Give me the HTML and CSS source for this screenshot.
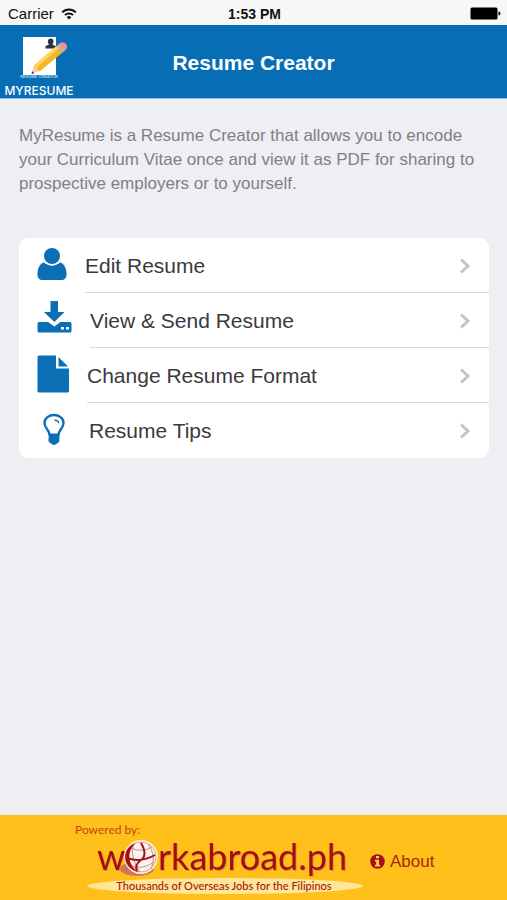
FILE: index.html
```html
<!DOCTYPE html>
<html lang="en">
<head>
<meta charset="utf-8">
<meta name="viewport" content="width=device-width, initial-scale=1">
<title>Resume Creator</title>
<link rel="stylesheet" href="styles.css">
</head>
<body>
<div class="status">
  <div class="carrier">
    <span>Carrier</span>
    <svg width="16" height="12" viewBox="0 0 16 12" aria-hidden="true">
      <path d="M1.2 4.4a9.6 9.6 0 0 1 13.6 0" fill="none" stroke="#111" stroke-width="2"/>
      <path d="M3.9 7.2a5.8 5.8 0 0 1 8.2 0" fill="none" stroke="#111" stroke-width="1.8"/>
      <path d="M8 11.6L5.7 9.2a3.3 3.3 0 0 1 4.6 0z" fill="#111"/>
    </svg>
  </div>
  <span class="time">1:53 PM</span>
  <svg class="battery" width="31" height="13" viewBox="0 0 31 13" aria-hidden="true">
    <rect x="0.5" y="0.5" width="27" height="12" rx="1.5" fill="#000"/>
    <path d="M28.5 4.5a2 2 0 0 1 0 4z" fill="#000"/>
  </svg>
</div>

<header class="header">
  <a class="brand" href="#" aria-label="MyResume home">
    <svg width="78" height="70" viewBox="0 0 78 70">
      <rect x="23" y="9" width="33" height="38" fill="#fff"/>
      <path d="M45.500 20.500v-2.200c1.500-1.200 3.200-1 3.500-2-2-2-1.200-5.800 1.700-5.800s3.700 3.800 1.700 5.800c.3 1 2 .8 3.500 2v2.200z" fill="#2b3442"/>
      <path d="M31.500 46l2.500-8.500 5.500 5.500z" fill="#f3cba6"/>
      <path d="M31.500 46l.8-2.700 1.900 1.900z" fill="#333"/>
      <path d="M34 37.500L56.500 18l6 6.500L39.500 43.500z" fill="#f5b526"/>
      <path d="M34 37.500L56.500 18l2.200 2.300L36 40z" fill="#ffd65a"/>
      <path d="M56.500 18l3-2.600 6 6.500-3 2.600z" fill="#c8b7a8"/>
      <path d="M58.500 16.200l1.700-1.300c3.500-2.300 8.800 2.200 6.300 6l-1.600 1.900z" fill="#ee8d9c"/>
      <text class="brand-small" x="39" y="50" text-anchor="middle">RESUME CREATOR</text>
      <text class="brand-name" x="39" y="67" text-anchor="middle">MYRESUME</text>
    </svg>
  </a>
  <h1>Resume Creator</h1>
</header>

<main class="content">
  <p class="intro">MyResume is a Resume Creator that allows you to encode your Curriculum Vitae once and view it as PDF for sharing to prospective employers or to yourself.</p>
  <ul class="menu">
    <li><a href="#">
      <svg width="30" height="34" viewBox="0 0 30 34" aria-hidden="true">
        <circle cx="15" cy="9" r="8" fill="#0a6fb5"/>
        <path d="M7 15.500c5 4.200 11 4.200 16 0 4.500 1 6.500 6 6.500 12 0 3.500-2 5.500-5 5.500h-19c-3 0-5-2-5-5.500 0-6 2-11 6.500-12z" fill="#0a6fb5"/>
      </svg>
      <span class="row"><span>Edit Resume</span><svg class="chevron" width="12" height="16" viewBox="0 0 12 16" aria-hidden="true"><path d="M2 1.500L9 8l-7 6.500"/></svg></span>
    </a></li>
    <li><a href="#">
      <svg width="35" height="38" viewBox="0 0 35 38" aria-hidden="true">
        <path d="M13.500 1h7.500v11h6.500L17.300 22 7 12h6.500z" fill="#0a6fb5"/>
        <path d="M2 22h9l6.300 4.500L23.500 22H33q1.500 0 1.500 1.500v7.500q0 1.500-1.500 1.500H2q-1.500 0-1.500-1.500v-7.500Q.5 22 2 22z" fill="#0a6fb5"/>
        <path d="M24 27h3v2.500h-3zM29 27h3v2.500h-3z" fill="#fff"/>
      </svg>
      <span class="row"><span>View &amp; Send Resume</span><svg class="chevron" width="12" height="16" viewBox="0 0 12 16" aria-hidden="true"><path d="M2 1.500L9 8l-7 6.500"/></svg></span>
    </a></li>
    <li><a href="#">
      <svg width="32" height="38" viewBox="0 0 32 38" aria-hidden="true">
        <path d="M2 .5h17V13.500h13V36q0 1.500-1.500 1.500H2Q.5 37.500.5 36V2Q.5.500 2 .5z" fill="#0a6fb5"/>
        <path d="M21.500 2L31 11.500h-9.500z" fill="#0a6fb5"/>
      </svg>
      <span class="row"><span>Change Resume Format</span><svg class="chevron" width="12" height="16" viewBox="0 0 12 16" aria-hidden="true"><path d="M2 1.500L9 8l-7 6.500"/></svg></span>
    </a></li>
    <li><a href="#">
      <svg width="34" height="34" viewBox="0 0 34 34" aria-hidden="true">
        <path d="M12.500 23c0-5-5-6.500-5-12C7.500 6 12 3 17 3s9.500 3 9.500 8c0 5.500-5 7-5 12" fill="#fff" stroke="#0a6fb5" stroke-width="2.400"/>
        <path d="M17.500 8.200c2.200 0 4 .9 4.200 3" fill="none" stroke="#0a6fb5" stroke-width="1.400"/>
        <path d="M11.500 21.500h11v7.500q0 1.500-2 2-1.500 2-3.500 2t-3.500-2q-2-.5-2-2z" fill="#0a6fb5"/>
        <path d="M11 25h1M22 28h1" stroke="#fff"/>
      </svg>
      <span class="row"><span>Resume Tips</span><svg class="chevron" width="12" height="16" viewBox="0 0 12 16" aria-hidden="true"><path d="M2 1.500L9 8l-7 6.500"/></svg></span>
    </a></li>
  </ul>
</main>

<footer class="footer">
  <div class="sponsor">
    <span class="powered">Powered by:</span>
    <svg class="logo" width="290" height="56" viewBox="0 0 290 56" role="img" aria-label="workabroad.ph">
      <ellipse cx="150" cy="48" rx="138" ry="8" fill="#fee69a"/>
      <ellipse cx="62" cy="31" rx="17" ry="7" fill="#cf765a"/>
      <text class="logo-text" x="22" y="32">w</text>
      <text class="logo-text" x="83" y="32">rkabroad.ph</text>
      <circle cx="66" cy="19" r="17" fill="#fff0d0"/>
      <circle cx="66" cy="19" r="15" fill="#f8f4f1" stroke="#d9a590"/>
      <g fill="none" stroke="#d08a80">
        <path d="M56 10q11 5 21-1M56 28q12 4 23-4M58 7q-3 13 7 27M73 6q9 12 3 25"/>
      </g>
      <path d="M52 20q14 5 28-3M66 5q7 12 0 17t-4 11" fill="none" stroke="#a90f18" stroke-width="2"/>
      <path d="M61 5c-15 4-15 26 3 29-10-5-14-20-3-29z" fill="#a90f18"/>
      <text class="tagline" x="149" y="52" text-anchor="middle">Thousands of Overseas Jobs for the Filipinos</text>
    </svg>
  </div>
  <a class="about" href="#">
    <svg width="15" height="15" viewBox="0 0 15 15" aria-hidden="true">
      <circle cx="7.500" cy="7.500" r="7.300" fill="#a80f12"/>
      <path d="M6 2h3v2.300H6zM5 5.800h4v5h1.200v1.700H5v-1.700h1.200V7.400H5z" fill="#ffd34e"/>
    </svg>
    <span>About</span>
  </a>
</footer>
</body>
</html>
```
FILE: styles.css
```css
* { box-sizing: border-box; }

body {
  margin: 0;
  min-height: 100vh;
  display: flex;
  flex-direction: column;
  background: #efeef3;
  color: #3a3a3c;
  font-family: "Liberation Sans", Arial, sans-serif;
}

a { color: inherit; text-decoration: none; }
svg { display: block; flex: none; }

.status {
  display: grid;
  grid-template-columns: 1fr auto 1fr;
  align-items: center;
  height: 25px;
  padding: 2px 6px 0 8px;
  background: #f7f7f7;
  color: #111;
  font-size: 14px;
}
.carrier { display: flex; align-items: center; gap: 7px; font-size: 15px; }
.time { font-weight: bold; }
.battery { justify-self: end; }

.header {
  display: grid;
  grid-template-columns: 1fr auto 1fr;
  align-items: center;
  height: 74px;
  padding-top: 2px;
  background: #076eb5;
  border-bottom: 1px solid #8dbbe0;
  color: #fff;
}
.header h1 { margin: 0; font-size: 21px; line-height: 24px; }
.brand-small { font: bold 4px "Liberation Sans", sans-serif; fill: #b9d4f3; }
.brand-name { font: 500 12px Inter, sans-serif; fill: #fff; }

.content { flex: 1; padding: 25px 18px 24px 19px; }
.intro { margin: 0; color: #808085; font-size: 17px; line-height: 24px; }

.menu {
  margin: 42px 0 0;
  padding: 0;
  list-style: none;
  background: #fff;
  border-radius: 9px;
}
.menu a {
  display: flex;
  align-items: center;
  gap: 18px;
  height: 55px;
  padding-left: 18px;
}
.menu a > svg { margin-bottom: 3px; }
.row {
  flex: 1;
  align-self: stretch;
  display: flex;
  align-items: center;
  justify-content: space-between;
  padding: 2px 18px 0 0;
  border-bottom: 1px solid #d9d9dc;
  font-size: 21px;
}
.menu li:last-child .row { border-bottom-color: transparent; }
.chevron path { fill: none; stroke: #c4c4c6; stroke-width: 3; }

.footer {
  display: flex;
  align-items: center;
  gap: 5px;
  height: 85px;
  padding-left: 75px;
  background: #ffc01b;
  color: #a9280e;
}
.sponsor { display: flex; flex-direction: column; }
.powered { font: 12px/16px Lato, sans-serif; color: #c4460c; }
.logo { overflow: visible; }
.logo-text {
  font: 36px Lato, sans-serif;
  fill: #a50d10;
  filter: drop-shadow(1px 1px 0 #d9963a);
}
.tagline { font: 500 11px Lato, sans-serif; fill: #a51a10; }
.about { display: flex; align-items: center; gap: 5px; font-size: 17px; padding-top: 8px; }
```
